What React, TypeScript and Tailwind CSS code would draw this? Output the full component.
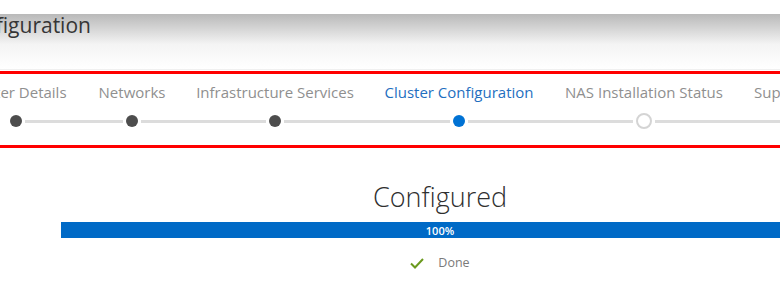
const steps = [
  { label: "Cluster Details", width: "w-[134px]", state: "done" },
  { label: "Networks", width: "w-[98px]", state: "done" },
  { label: "Infrastructure Services", width: "w-[188px]", state: "done" },
  { label: "Cluster Configuration", width: "w-[180px]", state: "active" },
  { label: "NAS Installation Status", width: "w-[190px]", state: "todo" },
  { label: "Support Bundle", width: "", state: "todo" },
];

const StepDot = ({ state }: { state: string }) => {
  if (state === "active") return <div className="h-[12px] w-[12px] shrink-0 rounded-full bg-[#0072d4]" />;
  if (state === "todo")
    return <div className="h-[16px] w-[16px] shrink-0 rounded-full border-2 border-[#d4d4d4] bg-white" />;
  return <div className="h-[12px] w-[12px] shrink-0 rounded-full bg-[#4d4d4d]" />;
};

export default function App() {
  return (
    <div className="h-[289px] w-[780px] overflow-hidden bg-white font-['Open_Sans',sans-serif]">
      <div className="h-[14px] bg-white" />
      {/* header band */}
      <div className="h-[56px] overflow-hidden border-b border-[#f0f0f0] bg-gradient-to-b from-[#b9b9b9] via-[#f4f4f4] via-55% to-white">
        <div className="ml-[-43px] whitespace-nowrap text-[21px] leading-[22px] text-[#353535]">Configuration</div>
      </div>

      {/* stepper */}
      <div className="mt-[1px] h-[77px] overflow-hidden border-y-[3px] border-[#ff0000]">
        <div className="ml-[-51px] flex pt-[8px]">
          {steps.map((s, i) => (
            <div key={s.label} className={`${s.width} flex shrink-0 flex-col items-center`}>
              <div
                className={`whitespace-nowrap px-[15px] text-[15px] leading-[20px] ${
                  s.state === "active" ? "text-[#1f6fbf]" : "text-[#8f8f8f]"
                }`}
              >
                {s.label}
              </div>
              <div className="mt-[11px] flex h-[16px] w-full items-center">
                <div className={`h-[3px] flex-1 ${i === 0 ? "bg-transparent" : "bg-[#dcdcdc]"} mr-[3px]`} />
                <StepDot state={s.state} />
                <div className="ml-[3px] h-[3px] flex-1 bg-[#dcdcdc]" />
              </div>
            </div>
          ))}
        </div>
      </div>

      {/* status */}
      <div className="ml-[61px] flex w-[758px] flex-col items-center">
        <div className="mt-[32px] text-[27px] font-light leading-[34px] text-[#2f2f2f]">Configured</div>
        <div className="mt-[8px] flex h-[16px] w-full items-center justify-center bg-[#006ac6] text-[11px] font-semibold leading-none text-white">
          100%
        </div>
        <div className="mt-[17px] flex items-center gap-[14px]">
          <svg width="14" height="11" viewBox="0 0 14 11" fill="none">
            <path d="M1 5.5 L5 9.5 L13 1" stroke="#6b9a1e" strokeWidth="2" />
          </svg>
          <span className="text-[12.5px] leading-[16px] text-[#7a7a7a]">Done</span>
        </div>
      </div>
    </div>
  );
}
